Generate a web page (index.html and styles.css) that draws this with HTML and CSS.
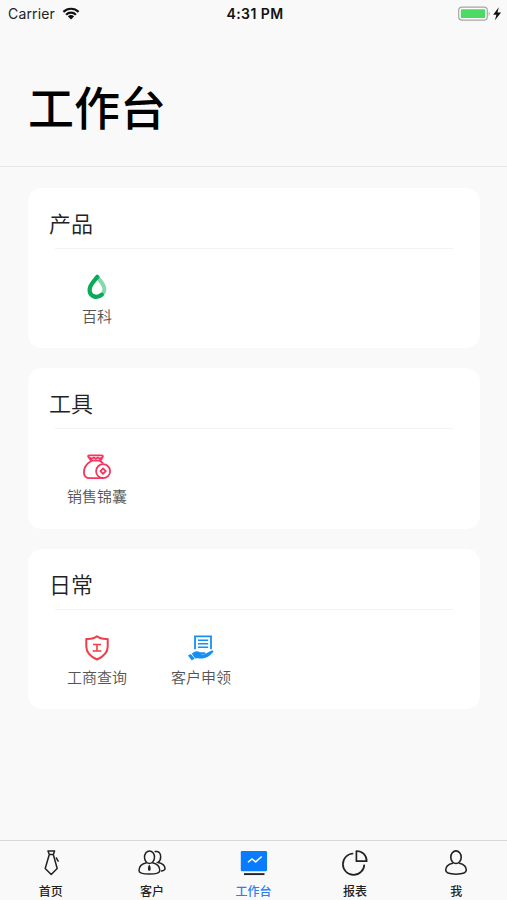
FILE: index.html
```html
<!DOCTYPE html>
<html lang="zh-CN">
<head>
    <meta charset="UTF-8">
    <meta name="viewport" content="width=device-width, initial-scale=1.0">
    <title>工作台</title>

    <link rel="stylesheet" href="styles.css">
</head>
<body>
    <div class="status-bar">
        <div class="status-left">
            <span>Carrier</span>
            <svg class="wifi" viewBox="0 0 18 13">
                <path d="M1.4 4.9a10.8 10.8 0 0 1 15.2 0M4.1 7.7a7 7 0 0 1 9.8 0" fill="none" stroke="#111" stroke-width="2.2"/>
                <path d="M5.9 9.4a4.4 4.4 0 0 1 6.2 0L9 12.6z" fill="#111"/>
            </svg>
        </div>
        <div class="status-time">4:31 PM</div>
        <div class="status-right">
            <svg class="battery" viewBox="0 0 44 16">
                <rect x=".7" y="1.2" width="28.6" height="13" rx="3.4" fill="#fff" stroke="#a5a5a5" stroke-width="1.2"/>
                <rect x="2.8" y="3.3" width="24.4" height="8.8" rx="1.2" fill="#4cd964"/>
                <path d="M30.7 5.5q2 2.2 0 4.4z" fill="#a5a5a5"/>
                <path d="M40.8 1.2L35.2 8.7h3.2l-1.5 5.5 6.2-7.6h-3.6z" fill="#111"/>
            </svg>
        </div>
    </div>

    <header class="header">
        <h1>工作台</h1>
    </header>

    <main class="content">
        <section class="card">
            <h2>产品</h2>
            <div class="items">
                <div class="item">
                    <svg viewBox="0 0 28 28">
                        <path d="M14.5 4.3C18 8.5 21.4 12 21.4 16.3a7.3 7.3 0 0 1-3 5.5" fill="none" stroke="#86d8ae" stroke-width="4"/>
                        <path d="M14.3 3.9C11 8 6.6 11.9 6.6 16.7c0 7 7.4 9.1 12.2 5" fill="none" stroke="#09ab5a" stroke-width="4.3" stroke-linecap="round"/>
                    </svg>
                    <span>百科</span>
                </div>
            </div>
        </section>

        <section class="card">
            <h2>工具</h2>
            <div class="items">
                <div class="item">
                    <svg viewBox="0 0 28 28" fill="none" stroke="#f5365f" stroke-width="1.8" stroke-linejoin="round" stroke-linecap="round">
                        <path d="M8.2 7.6L5.2 3.8q-.3-1.5 1.2-1.5h12.3q1.5 0 1.1 1.5L17.5 7.6zM6.5 4.6l2.3 1.2 2-1.2 2 1.2 2-1.2 2 1.2 2-1.2"/>
                        <path d="M8.2 8C4 10.5.9 14 .9 19.2c0 4 2.2 6 6 6H20M17.2 8l2.5 2"/>
                        <circle cx="20.1" cy="18.2" r="7"/>
                        <path d="M20.1 15.5l2.7 2.7-2.7 2.7-2.7-2.7z"/>
                    </svg>
                    <span>销售锦囊</span>
                </div>
            </div>
        </section>

        <section class="card">
            <h2>日常</h2>
            <div class="items">
                <div class="item">
                    <svg viewBox="0 0 28 28" fill="none" stroke="#f03e4a" stroke-linejoin="round">
                        <path d="M14 2.3C11.5 4.6 7 5.2 3.3 5v7.5c0 6 4.5 10.3 10.7 13 6.2-2.7 10.7-7 10.7-13V5C21 5.2 16.5 4.6 14 2.3z" stroke-width="2"/>
                        <path d="M10 10.5h8M14 10.5v6.5M9.6 17h8.8" stroke-width="1.6"/>
                    </svg>
                    <span>工商查询</span>
                </div>
                <div class="item">
                    <svg viewBox="0 0 28 28">
                        <path d="M8 15.2V2.4h16v12.8" fill="none" stroke="#1590f2" stroke-width="1.8"/>
                        <path d="M11 6.3h10.2M11 9.8h10.2M11 13.3h10.2" stroke="#1590f2" stroke-width="1.5"/>
                        <path d="M4.8 19.8c2.3-2.9 5.4-3.4 8.2-1.6h4.5c1.3.2 1.3 1.5 0 1.8l-3.7.6c4.2.5 7.4-2.6 10.6-3.8 1.5-.5 2.7.1 1.8 1.3-3 3.8-6.4 6.1-10.6 6.3-2.8.1-5.2-.7-7.4.1z" fill="#1590f2"/>
                        <path d="M1 21.4l2.8-1.5 3.8 4.5-2.8 2z" fill="#1590f2"/>
                    </svg>
                    <span>客户申领</span>
                </div>
            </div>
        </section>
    </main>

    <nav class="tab-bar">
        <div class="tab">
            <svg viewBox="0 0 28 28" fill="none" stroke="#222" stroke-width="1.5" stroke-linejoin="round">
                <path d="M11 2h6.6l-1.3 3.5h-4zM12.3 5.5L8.2 19.5l6 6 6-6-3.9-14"/>
                <path d="M19 8.5l2.5 4.2"/>
            </svg>
            <span>首页</span>
        </div>
        <div class="tab">
            <svg viewBox="0 0 28 28" fill="none" stroke="#222" stroke-width="1.5" stroke-linecap="round">
                <ellipse cx="11.5" cy="8.2" rx="5" ry="6.3"/>
                <path d="M8.5 13.8C4 14.8 1 17.5 1 21.5c0 2.5 3.5 3.6 10.4 3.6s10.4-1.1 10.4-3.6c0-4-3-6.7-7.3-7.7"/>
                <path d="M17.2 2.6c3.3-.8 5.5 1.7 5.5 5.2 0 2.6-1 4.6-2.7 5.6 4.5 1 7 3.6 7 6.1 0 1.5-1.3 2.2-3.4 2.6"/>
                <path d="M11.3 16.7v.5"/>
                <path d="M11.3 18.4v2.1" stroke-width="2.6"/>
            </svg>
            <span>客户</span>
        </div>
        <div class="tab active">
            <svg viewBox="0 0 28 28">
                <rect x=".8" y="2" width="26.2" height="20.2" rx="1.2" fill="#087bff"/>
                <path d="M8 13.3l4-3.4 3.7 3 6-5.4" fill="none" stroke="#fff" stroke-width="1.5"/>
                <path d="M4 25.1h20.5" stroke="#222" stroke-width="1.9"/>
            </svg>
            <span>工作台</span>
        </div>
        <div class="tab">
            <svg viewBox="0 0 28 28" fill="none" stroke="#222" stroke-width="1.7" stroke-linejoin="round">
                <path d="M12.3 4.5A10.7 10.7 0 1 0 23.3 15.6"/>
                <path d="M15.4 2v10.2h10.3C25.7 6 21.5 2 15.4 2z"/>
            </svg>
            <span>报表</span>
        </div>
        <div class="tab">
            <svg viewBox="0 0 28 28" fill="none" stroke="#222" stroke-width="1.6">
                <ellipse cx="14" cy="8.2" rx="5.2" ry="6.3"/>
                <path d="M10.9 14.2c-4.5.9-7.2 3.6-7.2 6.9 0 2.7 4 4.1 10.3 4.1s10.3-1.4 10.3-4.1c0-3.3-2.7-6-7.2-6.9"/>
            </svg>
            <span>我</span>
        </div>
    </nav>
</body>
</html>
```
FILE: styles.css
```css
/* General Styles */
* {
    box-sizing: border-box;
}

body {
    font-family: Inter, "Noto Sans CJK SC", sans-serif;
    background: #f9f9f9;
    color: #222;
    margin: 0;
    height: 100vh;
    display: flex;
    flex-direction: column;
    overflow: hidden;
}

h1,
h2 {
    margin: 0;
}

/* Status Bar */
.status-bar {
    display: flex;
    align-items: center;
    height: 27px;
    padding: 0 5px 0 8px;
    font-size: 14px;
}

.status-left,
.status-right {
    flex: 1;
    display: flex;
    align-items: center;
}

.status-left {
    gap: 7px;
    letter-spacing: 0.15px;
}

.status-right {
    justify-content: flex-end;
}

.status-time {
    font-size: 14px;
    font-weight: 600;
    letter-spacing: 0.45px;
    color: #111;
}

.wifi {
    width: 18px;
    height: 13px;
}

.battery {
    width: 44px;
    height: 16px;
}

/* Header */
.header {
    height: 140px;
    padding: 46px 28px 0;
    border-bottom: 1px solid #e6e6e6;
}

h1 {
    font-size: 46px;
    line-height: 70px;
    font-weight: 500;
    color: #000;
}

/* Cards */
.content {
    flex: 1;
    display: flex;
    flex-direction: column;
    gap: 20px;
    padding: 21px 27px 0 28px;
}

.card {
    height: 160.4px;
    padding: 20px 17px 0;
    background: #fff;
    border-radius: 14px;
}

h2 {
    padding-left: 4px;
    font-size: 22px;
    line-height: 32px;
    font-weight: 350;
}

.items {
    display: flex;
    padding-top: 33px;
    background: linear-gradient(#f3f3f3, #f3f3f3) 10px 8px / 398px 1px no-repeat;
}

.item {
    width: 104px;
    display: flex;
    flex-direction: column;
    align-items: center;
    font-size: 15px;
    line-height: 22px;
    font-weight: 350;
    color: #555;
}

.item svg {
    width: 28px;
    height: 28px;
    margin-bottom: 5px;
}

/* Tab Bar */
.tab-bar {
    display: flex;
    height: 60px;
    padding-top: 8px;
    border-top: 1px solid #d9d9d9;
}

.tab {
    flex: 1;
    display: flex;
    flex-direction: column;
    align-items: center;
    gap: 6px;
    font-size: 12px;
    line-height: 17px;
    font-weight: 500;
}

.tab svg {
    flex-shrink: 0;
    width: 28px;
    height: 28px;
}

.tab.active {
    color: #2b7ff5;
}
```
